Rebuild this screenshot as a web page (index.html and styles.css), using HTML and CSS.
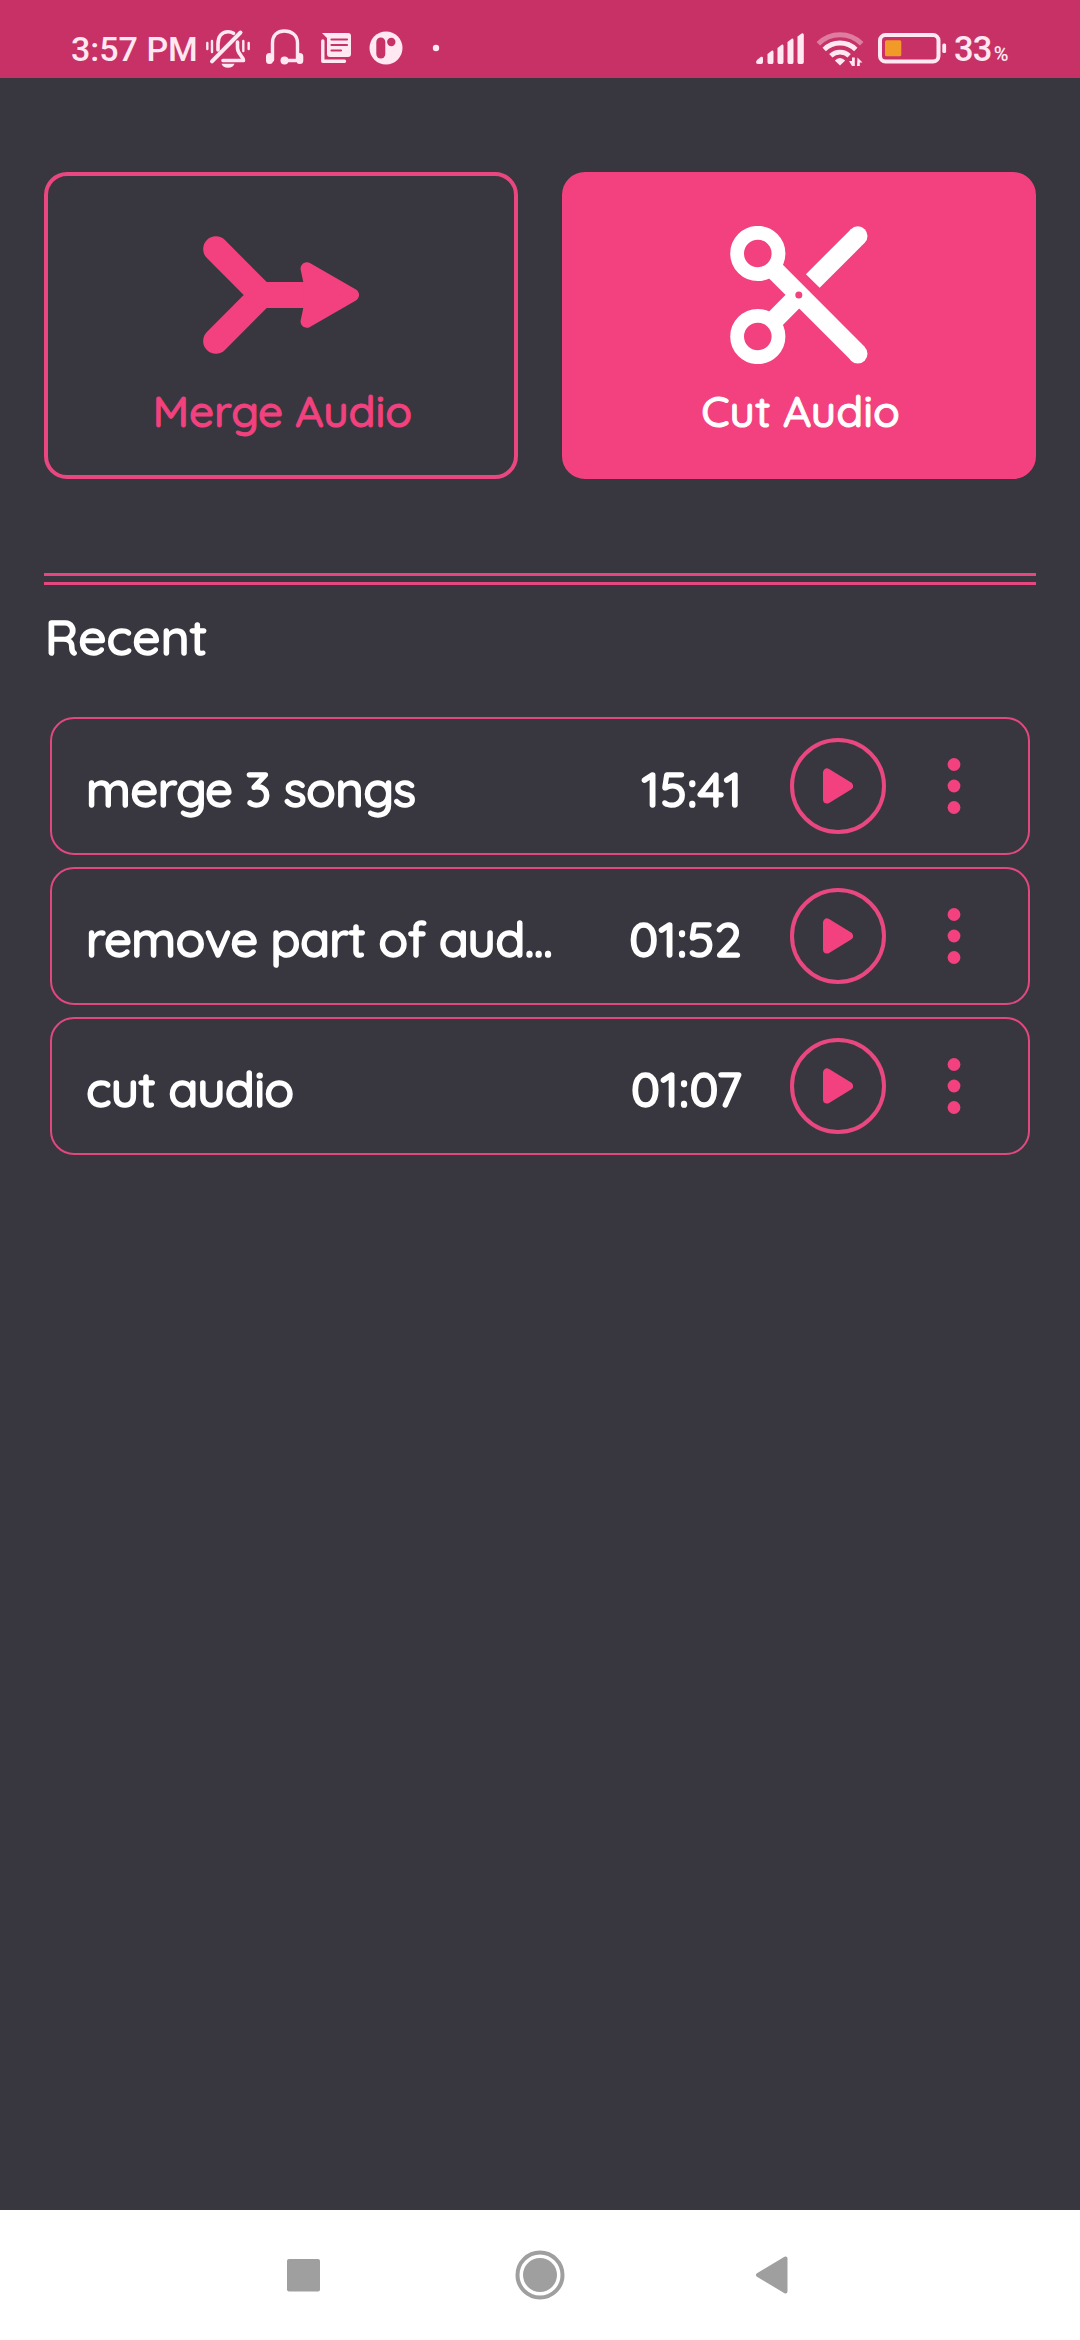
FILE: index.html
```html
<!DOCTYPE html>
<html lang="en">
<head>
<meta charset="utf-8">
<title>Audio Cutter</title>
<link rel="stylesheet" href="styles.css">
</head>
<body>
<svg width="0" height="0" class="sprite">
  <symbol id="play" viewBox="0 0 30 36"><path d="M4 4.500V31.500L26 18Z" fill="#f2417e" stroke="#f2417e" stroke-width="8" stroke-linejoin="round"/></symbol>
  <symbol id="more" viewBox="0 0 14 58"><g fill="#f2417e"><circle cx="7" cy="7.500" r="6.400"/><circle cx="7" cy="29" r="6.400"/><circle cx="7" cy="50.500" r="6.400"/></g></symbol>
</svg>
<div class="screen">
  <header class="status">
    <div class="clock">3:57 PM</div>
    <svg class="notices" width="240" height="52" viewBox="204 22 240 52" fill="none" stroke="#ffe8f1" stroke-linecap="round" stroke-linejoin="round">
      <path d="M212 61.300 240.500 32.500" stroke-width="4"/>
      <path d="M218 50V44C218 36 222 31.700 228 31.700C230 31.700 232 32.300 233.500 33.300" stroke-width="3.600"/>
      <path d="M237.500 42V48C237.500 54 243 56 243.500 60.500H223" stroke-width="3.600"/>
      <path d="M207.300 43V49M212 41V52M243.300 41V51M248.700 43V49" stroke-width="2.400"/>
      <path d="M221.500 63.800H234.500C233.500 66.200 231.500 67.800 228 67.800S222.500 66.200 221.500 63.800Z" fill="#ffe8f1" stroke="none"/>
      <path d="M272.500 60V43C272.500 35 277.500 31 284.500 31S297.500 35 297.500 43V60M285 60.500H296" stroke-width="3.400"/>
      <path d="M269.500 56.500V60.500M299.800 56.500V60.500" stroke-width="7"/>
      <circle cx="284.500" cy="60.500" r="4" fill="#ffe8f1" stroke="none"/>
      <path d="M322 33H348Q351 33 351 36V54Q351 57 348 57H330Q327 57 327 54V38Z" fill="#ffe8f1" stroke="none"/>
      <path d="M331.500 39.500H347M331.500 45H347M331.500 50.500H341" stroke="#c73166" stroke-width="2.200"/>
      <path d="M322.800 41V61.300H344.500" stroke-width="3.400"/>
      <circle cx="386" cy="48" r="16.500" fill="#ffe8f1" stroke="none"/>
      <rect x="376.300" y="37.500" width="9" height="21" rx="4.500" fill="#c73166" stroke="none"/>
      <circle cx="391.300" cy="42" r="4.200" fill="#c73166" stroke="none"/>
      <circle cx="436" cy="48" r="3.200" fill="#ffe8f1" stroke="none"/>
    </svg>
    <svg class="system" width="194" height="52" viewBox="754 22 194 52" fill="none" stroke="#ffe8f1">
      <g fill="#ffe8f1" stroke="none">
        <path d="M756 62 757 60 761 56.800Q763 56.300 763 58V62Q763 64 761 64H758Q756 64 756 62Z"/>
        <path d="M767.500 54 772 50.500Q773.500 50 773.500 52V62Q773.500 64 772 64H769Q767.500 64 767.500 62Z"/>
        <path d="M777.500 48 782 44.500Q783.500 44 783.500 46V62Q783.500 64 782 64H779Q777.500 64 777.500 62Z"/>
        <path d="M787.500 42 792 38.500Q793.500 38 793.500 40V62Q793.500 64 792 64H789Q787.500 64 787.500 62Z"/>
        <path d="M797.500 36.500 802 33.200Q803.800 32.800 803.800 35V62Q803.800 64 802 64H799Q797.500 64 797.500 62Z"/>
        <path d="M840 65.500 834.800 60.500Q840 55.500 845.200 60.500Z"/>
        <path d="M852 57.500H854.800V66H852L849 61H852ZM857.500 57.500 862.500 62.500H859.800V66H857Z"/>
      </g>
      <path d="M818.300 43.800A30.500 30.500 0 0 1 861.700 43.800" stroke-width="4.800" opacity=".42"/>
      <path d="M824.200 49.500A22.500 22.500 0 0 1 855.800 49.500M830.800 55.800A13.400 13.400 0 0 1 849.200 55.800" stroke-width="4.800"/>
      <rect x="880" y="35" width="58.500" height="26.500" rx="5.500" stroke-width="4"/>
      <rect x="885" y="40.300" width="16.300" height="16" rx="1.500" fill="#f29a27" stroke="none"/>
      <rect x="942.300" y="43.500" width="3.800" height="9.500" rx="1.500" fill="#ffe8f1" stroke="none"/>
    </svg>
    <div class="percent">33<small>%</small></div>
  </header>

  <main class="content">
    <div class="actions">
      <button class="card outline">
        <svg width="156" height="138" viewBox="202.500 226.500 156 138" fill="none" stroke="#f2417e" stroke-linecap="round" stroke-linejoin="round">
          <path d="M215.400 249.600 261.200 295.500 215.400 341.400" stroke-width="25.500"/>
          <path d="M264 295.500H312" stroke-width="26"/>
          <path d="M306.300 269 309.500 284V307L306.300 322 352.300 295.500Z" fill="#f2417e" stroke-width="12.500"/>
        </svg>
        <span class="label">Merge Audio</span>
      </button>
      <button class="card filled">
        <svg width="138" height="138" viewBox="729.500 226.500 138 138" fill="none" stroke="#fff">
          <circle cx="757.300" cy="254" r="20.700" stroke-width="13.800"/>
          <circle cx="757.300" cy="337" r="20.700" stroke-width="13.800"/>
          <path d="M772 268.700 857.300 354" stroke-width="19.400"/>
          <path d="M772 322.300 798.500 295.500M812.300 281.500 857.300 236.500" stroke-width="19.400"/>
          <circle cx="857.300" cy="236.500" r="9.700" fill="#fff" stroke="none"/>
          <circle cx="857.300" cy="354.300" r="9.700" fill="#fff" stroke="none"/>
          <circle cx="798.300" cy="295.500" r="3.500" fill="#f2417e" stroke="none"/>
        </svg>
        <span class="label">Cut Audio</span>
      </button>
    </div>
    <div class="divider"></div>
    <h2 class="heading">Recent</h2>
    <ul class="list">
      <li class="row"><span class="title">merge 3 songs</span><span class="time">15:41</span><span class="play"><svg width="30" height="36"><use href="#play"/></svg></span><svg class="more" width="14" height="58"><use href="#more"/></svg></li>
      <li class="row"><span class="title">remove part of aud…</span><span class="time">01:52</span><span class="play"><svg width="30" height="36"><use href="#play"/></svg></span><svg class="more" width="14" height="58"><use href="#more"/></svg></li>
      <li class="row"><span class="title">cut audio</span><span class="time">01:07</span><span class="play"><svg width="30" height="36"><use href="#play"/></svg></span><svg class="more" width="14" height="58"><use href="#more"/></svg></li>
    </ul>
  </main>

  <nav class="navbar">
    <svg width="33" height="38" viewBox="0 0 33 38"><rect x="0" y="3" width="33" height="32.500" rx="2" fill="#9f9f9f"/></svg>
    <svg class="home" width="50" height="50" viewBox="0 0 50 50"><circle cx="25" cy="25" r="22.500" fill="none" stroke="#9f9f9f" stroke-width="4"/><circle cx="25" cy="25" r="17" fill="#9f9f9f"/></svg>
    <svg width="33" height="38" viewBox="0 0 33 38"><path d="M30.500 2.500V35.500L3 19Z" fill="#9f9f9f" stroke="#9f9f9f" stroke-width="4" stroke-linejoin="round"/></svg>
  </nav>
</div>
</body>
</html>
```
FILE: styles.css
```css
* { box-sizing: border-box; }
body { margin: 0; }
.sprite { position: absolute; }

.screen {
  width: 1080px;
  height: 2340px;
  display: flex;
  flex-direction: column;
  overflow: hidden;
  background: #38373f;
  color: #fff;
  font-family: Quicksand, Lato, sans-serif;
  font-weight: 500;
}
svg { display: block; flex: none; }

.status {
  height: 78px;
  padding: 22px 0 0 71px;
  display: flex;
  align-items: flex-start;
  background: #c73166;
  color: #ffe8f1;
  font-family: Roboto, sans-serif;
}
.clock { width: 133px; font-size: 34px; line-height: 54px; white-space: nowrap; }
.system { margin-left: 310px; }
.percent { margin-left: 6px; font-size: 34.500px; line-height: 54px; letter-spacing: -.8px; }
.percent small { margin-left: 2px; font-size: 20px; letter-spacing: 0; }

.content { flex: 1; padding: 94px 44px 0; }
.actions { display: flex; gap: 44px; }
.card {
  flex: 1;
  height: 307px;
  padding: 50px 0 0;
  display: flex;
  flex-direction: column;
  align-items: center;
  gap: 20px;
  border: 4px solid #f2417e;
  border-radius: 23px;
  font: inherit;
  font-size: 44px;
  line-height: 54px;
  -webkit-text-stroke: 1px currentColor;
}
.outline { background: none; color: #f2417e; border-color: #ea467f; }
.filled { background: #f2417e; color: #fff; }
.label { padding-left: 3px; }

.divider {
  height: 12px;
  margin-top: 94px;
  border-top: 3px solid #e6477f;
  border-bottom: 3px solid #e6477f;
}
.heading {
  margin: 21px 0 51px;
  padding-left: 1px;
  font-size: 49.500px;
  line-height: 60px;
  font-weight: 500;
  -webkit-text-stroke: 1.500px currentColor;
}

.list {
  margin: 0;
  padding: 0 6px;
  display: flex;
  flex-direction: column;
  gap: 12px;
  list-style: none;
}
.row {
  height: 138px;
  padding: 0 67px 0 34px;
  display: flex;
  align-items: center;
  border: 2px solid #e0487f;
  border-radius: 24px;
  font-size: 49px;
  line-height: 60px;
  -webkit-text-stroke: 1.500px currentColor;
}
.title { flex: 1; margin-top: 6px; white-space: nowrap; letter-spacing: -.650px; }
.time { width: 150px; margin: 6px 48px 0 0; text-align: right; }
.play {
  width: 96px;
  height: 96px;
  display: flex;
  align-items: center;
  justify-content: center;
  border: 4px solid #e8477f;
  border-radius: 50%;
}
.more { margin-left: 61px; }

.navbar {
  height: 130px;
  padding: 0 292px 0 287px;
  display: flex;
  align-items: center;
  justify-content: space-between;
  background: #fff;
}
.home { margin-left: 5px; }
```
